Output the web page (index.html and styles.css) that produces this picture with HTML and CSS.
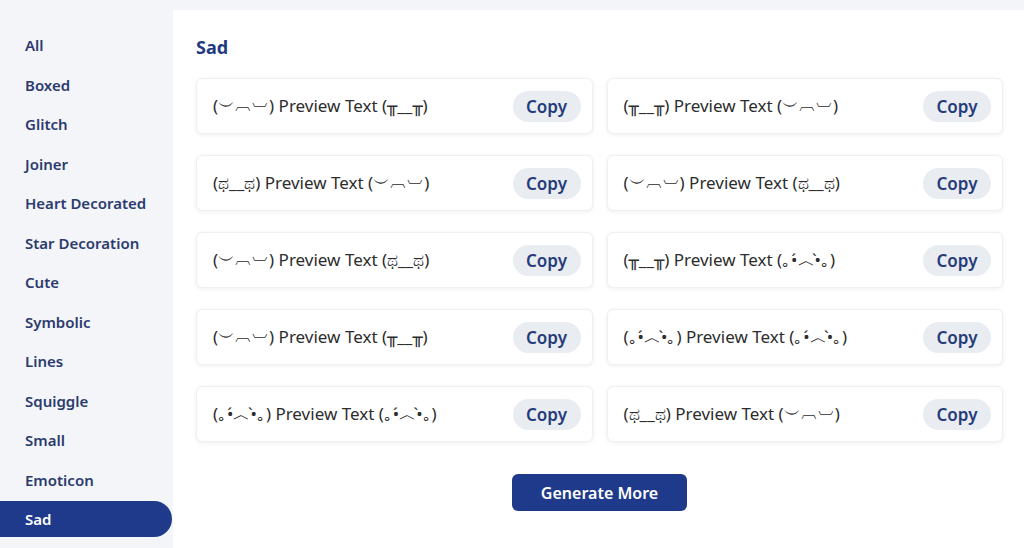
FILE: index.html
```html
<!DOCTYPE html>
<html lang="en">
<head>
<meta charset="utf-8">
<title>Sad Text</title>
<link rel="stylesheet" href="styles.css">
</head>
<body>
<div class="app">
  <nav class="sidebar">
    <a class="nav-item">All</a>
    <a class="nav-item">Boxed</a>
    <a class="nav-item">Glitch</a>
    <a class="nav-item">Joiner</a>
    <a class="nav-item">Heart Decorated</a>
    <a class="nav-item">Star Decoration</a>
    <a class="nav-item">Cute</a>
    <a class="nav-item">Symbolic</a>
    <a class="nav-item">Lines</a>
    <a class="nav-item">Squiggle</a>
    <a class="nav-item">Small</a>
    <a class="nav-item">Emoticon</a>
    <a class="nav-item active">Sad</a>
  </nav>
  <main class="panel">
    <h2 class="title">Sad</h2>
    <div class="grid">
      <div class="card"><span class="preview">(︶︹︺) Preview Text (╥__╥)</span><button class="copy">Copy</button></div>
      <div class="card"><span class="preview">(╥__╥) Preview Text (︶︹︺)</span><button class="copy">Copy</button></div>
      <div class="card"><span class="preview">(ಥ__ಥ) Preview Text (︶︹︺)</span><button class="copy">Copy</button></div>
      <div class="card"><span class="preview">(︶︹︺) Preview Text (ಥ__ಥ)</span><button class="copy">Copy</button></div>
      <div class="card"><span class="preview">(︶︹︺) Preview Text (ಥ__ಥ)</span><button class="copy">Copy</button></div>
      <div class="card"><span class="preview">(╥__╥) Preview Text (｡•́︿•̀｡)</span><button class="copy">Copy</button></div>
      <div class="card"><span class="preview">(︶︹︺) Preview Text (╥__╥)</span><button class="copy">Copy</button></div>
      <div class="card"><span class="preview">(｡•́︿•̀｡) Preview Text (｡•́︿•̀｡)</span><button class="copy">Copy</button></div>
      <div class="card"><span class="preview">(｡•́︿•̀｡) Preview Text (｡•́︿•̀｡)</span><button class="copy">Copy</button></div>
      <div class="card"><span class="preview">(ಥ__ಥ) Preview Text (︶︹︺)</span><button class="copy">Copy</button></div>
    </div>
    <div class="more-row"><button class="more">Generate More</button></div>
  </main>
</div>
</body>
</html>
```
FILE: styles.css
```css
* { box-sizing: border-box; }
html, body { margin: 0; padding: 0; }
body {
  background: #f4f5f8;
  font-family: "Noto Sans", "Open Sans", "DejaVu Sans", sans-serif;
  color: #2b2b2b;
  height: 548px;
  overflow: hidden;
}
.app {
  display: flex;
  height: 548px;
}
.sidebar {
  width: 173px;
  flex: none;
  padding-top: 27px;
  display: flex;
  flex-direction: column;
  padding-right: 1px;
}
.nav-item {
  display: flex;
  align-items: center;
  height: 36px;
  margin-bottom: 3.5px;
  padding-left: 25px;
  font-size: 15px;
  font-weight: 600;
  color: #2c3b6e;
  border-radius: 0 18px 18px 0;
}
.nav-item.active {
  background: #1f3a8a;
  color: #ffffff;
}
.panel {
  flex: 1;
  margin-top: 10px;
  background: #ffffff;
  padding: 25px 21px 0 23px;
}
.title {
  margin: 0 0 19px 0;
  font-size: 18px;
  font-weight: 700;
  color: #1f3a7f;
  line-height: 24px;
}
.grid {
  display: grid;
  grid-template-columns: 1fr 1fr;
  column-gap: 14px;
  row-gap: 21px;
}
.card {
  height: 56px;
  display: flex;
  align-items: center;
  justify-content: space-between;
  padding: 0 11px 0 16px;
  background: #ffffff;
  border: 1px solid #eef0f3;
  border-radius: 6px;
  box-shadow: 0 1px 4px rgba(20, 30, 60, 0.07);
}
.preview {
  font-size: 17px;
  color: #2d2d2d;
  white-space: nowrap;
}
.copy {
  border: none;
  background: #e9ecf1;
  color: #263c7a;
  font-family: inherit;
  font-size: 17px;
  font-weight: 600;
  height: 31px;
  width: 68px;
  border-radius: 16px;
  padding: 0;
}
.more-row {
  display: flex;
  justify-content: center;
  padding-top: 32px;
}
.more {
  border: none;
  background: #1f3a8a;
  color: #ffffff;
  font-family: inherit;
  font-size: 16px;
  font-weight: 600;
  width: 175px;
  height: 37px;
  border-radius: 6px;
}
```
